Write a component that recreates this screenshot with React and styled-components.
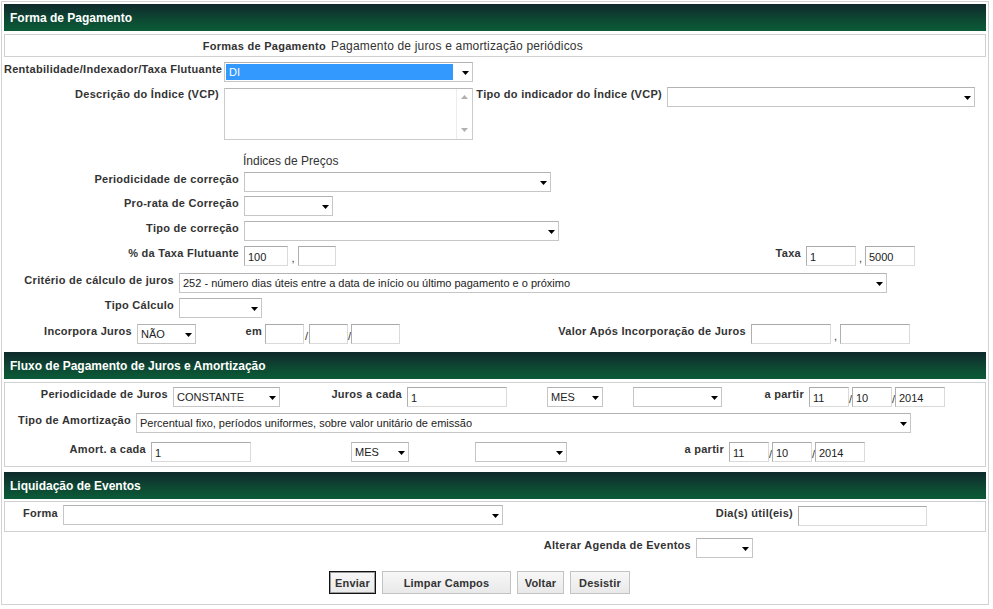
import styled, { createGlobalStyle } from "styled-components";

const GlobalStyle = createGlobalStyle`
  body {
    margin: 0;
    background: #fff;
    font-family: "Liberation Sans", Arial, sans-serif;
  }
`;

function Caret({ color = "#000" }) {
  return (
    <CaretSvg width="7" height="4" viewBox="0 0 7 4">
      <path d="M0 0H7L3.5 4Z" fill={color} />
    </CaretSvg>
  );
}

function Combo({ w, value, selected }) {
  return (
    <Select $w={w}>
      {selected ? <Highlight>{value}</Highlight> : <Value>{value}</Value>}
      <Caret />
    </Select>
  );
}

function Field({ w, value = "", top }) {
  return <Input $w={w} $top={top} value={value} readOnly />;
}

function App() {
  return (
    <>
      <GlobalStyle />
      <Frame>
        <SectionHeader>Forma de Pagamento</SectionHeader>
        <Panel $mt={3} $h={23}>
          <PanelRow>
            <Label $w={326} $pt={0}>Formas de Pagamento</Label>
            <Plain>Pagamento de juros e amortização periódicos</Plain>
          </PanelRow>
        </Panel>

        <Row $mt={5}>
          <Label $w={220}>Rentabilidade/Indexador/Taxa Flutuante</Label>
          <Combo w={249} value="DI" selected />
        </Row>

        <Row $mt={5} $h={53}>
          <Label $w={220}>Descrição do Índice (VCP)</Label>
          <Memo>
            <MemoText />
            <Scroll>
              <ScrollArrow width="7" height="4" viewBox="0 0 7 4">
                <path d="M0 4H7L3.5 0Z" fill="#b0b0b0" />
              </ScrollArrow>
              <ScrollArrow width="7" height="4" viewBox="0 0 7 4">
                <path d="M0 0H7L3.5 4Z" fill="#b0b0b0" />
              </ScrollArrow>
            </Scroll>
          </Memo>
          <Label $w={194}>Tipo do indicador do Índice (VCP)</Label>
          <Combo w={308} />
        </Row>

        <Note $mt={14} $ml={239}>Índices de Preços</Note>

        <Row $mt={4}>
          <Label $w={240}>Periodicidade de correção</Label>
          <Combo w={307} />
        </Row>
        <Row $mt={4}>
          <Label $w={240}>Pro-rata de Correção</Label>
          <Combo w={89} />
        </Row>
        <Row $mt={5}>
          <Label $w={240}>Tipo de correção</Label>
          <Combo w={315} />
        </Row>
        <Row $mt={5}>
          <Label $w={240}>% da Taxa Flutuante</Label>
          <Field w={44} value="100" />
          <Sep $w={10}>,</Sep>
          <Field w={38} />
          <Label $w={470}>Taxa</Label>
          <Field w={50} value="1" />
          <Sep $w={9}>,</Sep>
          <Field w={50} value="5000" />
        </Row>
        <Row $mt={7}>
          <Label $w={175}>Critério de cálculo de juros</Label>
          <Combo
            w={708}
            value="252 - número dias úteis entre a data de início ou último pagamento e o próximo"
          />
        </Row>
        <Row $mt={5}>
          <Label $w={175}>Tipo Cálculo</Label>
          <Combo w={83} />
        </Row>
        <Row $mt={6}>
          <Label $w={133}>Incorpora Juros</Label>
          <Combo w={59} value="NÃO" />
          <Label $w={69} $pr={3}>em</Label>
          <Field w={39} />
          <Sep $w={5}>/</Sep>
          <Field w={39} />
          <Sep $w={3}>/</Sep>
          <Field w={49} />
          <Label $w={351}>Valor Após Incorporação de Juros</Label>
          <Field w={80} />
          <Sep $w={9}>,</Sep>
          <Field w={70} />
        </Row>

        <SectionHeader $mt={8}>Fluxo de Pagamento de Juros e Amortização</SectionHeader>
        <Panel $mt={3} $pt={4} $pb={4}>
          <Row>
            <Label $w={168}>Periodicidade de Juros</Label>
            <Combo w={107} value="CONSTANTE" />
            <Label $w={127}>Juros a cada</Label>
            <Field w={100} value="1" />
            <Gap $w={40} />
            <Combo w={56} value="MES" />
            <Gap $w={30} />
            <Combo w={89} />
            <Label $w={87}>a partir</Label>
            <Field w={40} value="11" />
            <Sep $w={3}>/</Sep>
            <Field w={40} value="10" />
            <Sep $w={3}>/</Sep>
            <Field w={50} value="2014" />
          </Row>
          <Row $mt={6}>
            <Label $w={131}>Tipo de Amortização</Label>
            <Combo
              w={775}
              value="Percentual fixo, períodos uniformes, sobre valor unitário de emissão"
            />
          </Row>
          <Row $mt={9}>
            <Label $w={146}>Amort. a cada</Label>
            <Field w={100} value="1" />
            <Gap $w={100} />
            <Combo w={58} value="MES" />
            <Gap $w={66} />
            <Combo w={92} />
            <Label $w={162}>a partir</Label>
            <Field w={40} value="11" />
            <Sep $w={3}>/</Sep>
            <Field w={40} value="10" />
            <Sep $w={3}>/</Sep>
            <Field w={50} value="2014" />
          </Row>
        </Panel>

        <SectionHeader $mt={5}>Liquidação de Eventos</SectionHeader>
        <Panel $mt={2} $pt={3} $pb={5}>
          <Row $h={21}>
            <Label $w={58} $pt={1}>Forma</Label>
            <Combo w={440} />
            <Label $w={295} $pt={1}>Dia(s) útil(eis)</Label>
            <Field w={129} top={1} />
          </Row>
        </Panel>

        <Row $mt={6}>
          <Label $w={692}>Alterar Agenda de Eventos</Label>
          <Combo w={57} />
        </Row>

        <Actions>
          <Button $w={47} $focus>Enviar</Button>
          <Button $w={129}>Limpar Campos</Button>
          <Button $w={47}>Voltar</Button>
          <Button $w={60}>Desistir</Button>
        </Actions>
      </Frame>
    </>
  );
}

const Frame = styled.div`
  margin: 1px 0 0 1px;
  width: 982px;
  border: 1px solid #d2d2d2;
  padding: 2px 2px 10px;
`;

const SectionHeader = styled.div`
  margin-top: ${(p) => p.$mt || 0}px;
  height: 27px;
  padding-left: 6px;
  line-height: 28px;
  background: linear-gradient(#0f292b, #0d4a33 60%, #0b5a37);
  color: #fff;
  font-size: 12px;
  font-weight: bold;
`;

const Panel = styled.div`
  box-sizing: border-box;
  margin-top: ${(p) => p.$mt || 0}px;
  height: ${(p) => (p.$h ? `${p.$h}px` : "auto")};
  padding: ${(p) => p.$pt || 0}px 0 ${(p) => p.$pb || 0}px;
  border: 1px solid #d0d0d0;
`;

const PanelRow = styled.div`
  display: flex;
  align-items: center;
  height: 100%;
`;

const Row = styled.div`
  display: flex;
  align-items: flex-start;
  height: ${(p) => p.$h || 20}px;
  margin-top: ${(p) => p.$mt || 0}px;
`;

const Label = styled.div`
  box-sizing: border-box;
  flex-shrink: 0;
  width: ${(p) => p.$w}px;
  padding-right: ${(p) => (p.$pr === undefined ? 5 : p.$pr)}px;
  padding-top: ${(p) => p.$pt || 0}px;
  text-align: right;
  white-space: nowrap;
  line-height: 14px;
  font-size: 11px;
  font-weight: bold;
  letter-spacing: 0.28px;
  color: #333;
`;

const Plain = styled.span`
  font-size: 12px;
  letter-spacing: 0.18px;
  color: #333;
  white-space: nowrap;
`;

const Note = styled.div`
  margin: ${(p) => p.$mt || 0}px 0 0 ${(p) => p.$ml || 0}px;
  line-height: 14px;
  font-size: 12px;
  color: #333;
`;

const Select = styled.div`
  box-sizing: border-box;
  flex-shrink: 0;
  display: flex;
  align-items: center;
  width: ${(p) => p.$w}px;
  height: 20px;
  padding-left: 3px;
  border: 1px solid #c6c6c6;
  border-top-color: #b2b2b2;
  background: #fff;
  font-size: 11px;
  color: #222;
`;

const Value = styled.span`
  flex: 1;
  overflow: hidden;
  white-space: nowrap;
`;

const Highlight = styled.span`
  flex: 1;
  height: 16px;
  margin: 0 9px 0 -2px;
  padding-left: 3px;
  line-height: 16px;
  background: #3399ff;
  color: #fff;
`;

const CaretSvg = styled.svg`
  flex-shrink: 0;
  margin: 1px 3px 0 auto;
`;

const Input = styled.input`
  box-sizing: border-box;
  flex-shrink: 0;
  width: ${(p) => p.$w}px;
  height: 20px;
  margin: ${(p) => p.$top || 0}px 0 0;
  padding: 2px 3px 0;
  border: 1px solid;
  border-color: #a9a9a9 #dadada #dadada #b0b0b0;
  background: #fff;
  font-family: "Liberation Sans", Arial, sans-serif;
  font-size: 11px;
  color: #222;
  outline: none;
`;

const Sep = styled.span`
  flex-shrink: 0;
  width: ${(p) => p.$w}px;
  padding-top: 4px;
  line-height: 16px;
  text-align: center;
  font-size: 11px;
  color: #333;
`;

const Gap = styled.span`
  flex-shrink: 0;
  width: ${(p) => p.$w}px;
`;

const Memo = styled.div`
  box-sizing: border-box;
  flex-shrink: 0;
  display: flex;
  width: 249px;
  height: 52px;
  margin-top: 1px;
  border: 1px solid #cbcbcb;
  border-top-color: #b8b8b8;
  background: #fff;
`;

const MemoText = styled.div`
  flex: 1;
`;

const Scroll = styled.div`
  display: flex;
  flex-direction: column;
  justify-content: space-between;
  align-items: center;
  width: 15px;
  padding: 6px 0 7px;
  border-left: 1px solid #ececec;
`;

const ScrollArrow = styled.svg`
  display: block;
`;

const Actions = styled.div`
  display: flex;
  gap: 6px;
  height: 23px;
  margin-top: 13px;
  padding-left: 325px;
`;

const Button = styled.button`
  box-sizing: border-box;
  width: ${(p) => p.$w}px;
  height: 23px;
  padding: 0;
  border: 1px solid ${(p) => (p.$focus ? "#111" : "#c3c3c3")};
  box-shadow: ${(p) => (p.$focus ? "inset 0 0 0 1px #9a9a9a" : "none")};
  background: linear-gradient(#f7f7f7, #e9e9e9);
  font-family: "Liberation Sans", Arial, sans-serif;
  font-size: 11px;
  font-weight: bold;
  letter-spacing: 0.2px;
  color: #333;
`;

export default App;
